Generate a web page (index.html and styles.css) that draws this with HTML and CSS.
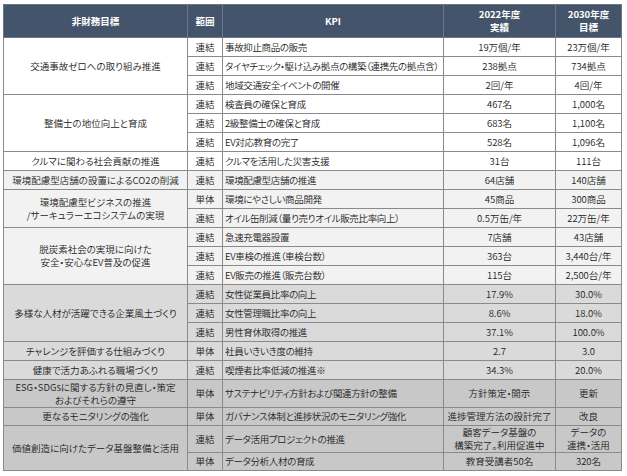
FILE: index.html
```html
<!DOCTYPE html>
<html lang="ja">
<head>
<meta charset="utf-8">
<title>非財務目標 KPI</title>
<link rel="stylesheet" href="styles.css">
</head>
<body>
<table class="kpi">
  <colgroup>
    <col class="c-goal"><col class="c-scope"><col class="c-kpi"><col class="c-act"><col class="c-tgt">
  </colgroup>
  <thead>
    <tr class="r-head">
      <th>非財務目標</th>
      <th>範囲</th>
      <th>KPI</th>
      <th>2022年度<br>実績</th>
      <th>2030年度<br>目標</th>
    </tr>
  </thead>
  <tbody>
    <tr class="g-white">
      <td class="goal" rowspan="3">交通事故ゼロへの取り組み推進</td>
      <td class="scope">連結</td><td class="kpi-t">事故抑止商品の販売</td><td class="num">19万個/年</td><td class="num">23万個/年</td>
    </tr>
    <tr class="g-white">
      <td class="scope">連結</td><td class="kpi-t">タイヤチェック・駆け込み拠点の構築（連携先の拠点含）</td><td class="num">238拠点</td><td class="num">734拠点</td>
    </tr>
    <tr class="g-white">
      <td class="scope">連結</td><td class="kpi-t">地域交通安全イベントの開催</td><td class="num">2回/年</td><td class="num">4回/年</td>
    </tr>
    <tr class="g-white">
      <td class="goal" rowspan="3">整備士の地位向上と育成</td>
      <td class="scope">連結</td><td class="kpi-t">検査員の確保と育成</td><td class="num">467名</td><td class="num">1,000名</td>
    </tr>
    <tr class="g-white">
      <td class="scope">連結</td><td class="kpi-t">2級整備士の確保と育成</td><td class="num">683名</td><td class="num">1,100名</td>
    </tr>
    <tr class="g-white">
      <td class="scope">連結</td><td class="kpi-t">EV対応教育の完了</td><td class="num">528名</td><td class="num">1,096名</td>
    </tr>
    <tr class="g-white">
      <td class="goal">クルマに関わる社会貢献の推進</td>
      <td class="scope">連結</td><td class="kpi-t">クルマを活用した災害支援</td><td class="num">31台</td><td class="num">111台</td>
    </tr>
    <tr class="g-env">
      <td class="goal">環境配慮型店舗の設置によるCO2の削減</td>
      <td class="scope">連結</td><td class="kpi-t">環境配慮型店舗の推進</td><td class="num">64店舗</td><td class="num">140店舗</td>
    </tr>
    <tr class="g-env">
      <td class="goal" rowspan="2">環境配慮型ビジネスの推進<br>/サーキュラーエコシステムの実現</td>
      <td class="scope">単体</td><td class="kpi-t">環境にやさしい商品開発</td><td class="num">45商品</td><td class="num">300商品</td>
    </tr>
    <tr class="g-env">
      <td class="scope">連結</td><td class="kpi-t">オイル缶削減（量り売りオイル販売比率向上）</td><td class="num">0.5万缶/年</td><td class="num">22万缶/年</td>
    </tr>
    <tr class="g-env">
      <td class="goal" rowspan="3">脱炭素社会の実現に向けた<br>安全・安心なEV普及の促進</td>
      <td class="scope">連結</td><td class="kpi-t">急速充電器設置</td><td class="num">7店舗</td><td class="num">43店舗</td>
    </tr>
    <tr class="g-env">
      <td class="scope">連結</td><td class="kpi-t">EV車検の推進（車検台数）</td><td class="num">363台</td><td class="num">3,440台/年</td>
    </tr>
    <tr class="g-env">
      <td class="scope">連結</td><td class="kpi-t">EV販売の推進（販売台数）</td><td class="num">115台</td><td class="num">2,500台/年</td>
    </tr>
    <tr class="g-soc">
      <td class="goal" rowspan="3">多様な人材が活躍できる企業風土づくり</td>
      <td class="scope">連結</td><td class="kpi-t">女性従業員比率の向上</td><td class="num">17.9%</td><td class="num">30.0%</td>
    </tr>
    <tr class="g-soc">
      <td class="scope">連結</td><td class="kpi-t">女性管理職比率の向上</td><td class="num">8.6%</td><td class="num">18.0%</td>
    </tr>
    <tr class="g-soc">
      <td class="scope">連結</td><td class="kpi-t">男性育休取得の推進</td><td class="num">37.1%</td><td class="num">100.0%</td>
    </tr>
    <tr class="g-soc">
      <td class="goal">チャレンジを評価する仕組みづくり</td>
      <td class="scope">単体</td><td class="kpi-t">社員いきいき度の維持</td><td class="num">2.7</td><td class="num">3.0</td>
    </tr>
    <tr class="g-soc">
      <td class="goal">健康で活力あふれる職場づくり</td>
      <td class="scope">連結</td><td class="kpi-t">喫煙者比率低減の推進※</td><td class="num">34.3%</td><td class="num">20.0%</td>
    </tr>
    <tr class="g-gov r-tall">
      <td class="goal">ESG・SDGsに関する方針の見直し・策定<br>およびそれらの遵守</td>
      <td class="scope">単体</td><td class="kpi-t">サステナビリティ方針および関連方針の整備</td><td class="num">方針策定・開示</td><td class="num">更新</td>
    </tr>
    <tr class="g-gov r-short">
      <td class="goal">更なるモニタリングの強化</td>
      <td class="scope">単体</td><td class="kpi-t">ガバナンス体制と進捗状況のモニタリング強化</td><td class="num">進捗管理方法の設計完了</td><td class="num">改良</td>
    </tr>
    <tr class="g-gov r-tall2">
      <td class="goal" rowspan="2">価値創造に向けたデータ基盤整備と活用</td>
      <td class="scope">連結</td><td class="kpi-t">データ活用プロジェクトの推進</td><td class="num">顧客データ基盤の<br>構築完了。利用促進中</td><td class="num">データの<br>連携・活用</td>
    </tr>
    <tr class="g-gov r-short">
      <td class="scope">単体</td><td class="kpi-t">データ分析人材の育成</td><td class="num">教育受講者50名</td><td class="num">320名</td>
    </tr>
  </tbody>
</table>
</body>
</html>
```

FILE: styles.css
```css
html, body {
  margin: 0;
  padding: 0;
  background: #ffffff;
}

body {
  padding: 4px 0 0 3px;
  font-family: "Noto Sans CJK JP", "Noto Sans", sans-serif;
  font-size: 9.5px;
  font-weight: 350;
  color: #222222;
}

.kpi {
  border-collapse: collapse;
  table-layout: fixed;
  width: 618px;
  font-feature-settings: "palt" 1;
  line-height: 13px;
}

.c-goal { width: 184px; }
.c-scope { width: 35px; }
.c-kpi { width: 221px; }
.c-act { width: 112px; }
.c-tgt { width: 66px; }

.kpi th,
.kpi td {
  border: 1px solid #8a8a8a;
  padding: 0 2px;
  vertical-align: middle;
  white-space: nowrap;
  overflow: hidden;
}

.r-head th {
  background: #44546a;
  color: #ffffff;
  font-weight: bold;
  text-align: center;
  height: 32px;
  line-height: 13px;
  border-color: #6b7788;
}

.kpi tbody tr { height: 19px; }
.kpi tbody tr.r-tall { height: 28px; }
.kpi tbody tr.r-tall2 { height: 26px; }
.kpi tbody tr.r-short { height: 18px; }

.goal,
.scope,
.num {
  text-align: center;
}

.kpi-t {
  text-align: left;
  letter-spacing: -0.35px;
}

.g-white td { background: #ffffff; }
.g-env td { background: #f2f2f2; }
.g-soc td { background: #dadada; }
.g-gov td { background: #c8c8c8; }
```
